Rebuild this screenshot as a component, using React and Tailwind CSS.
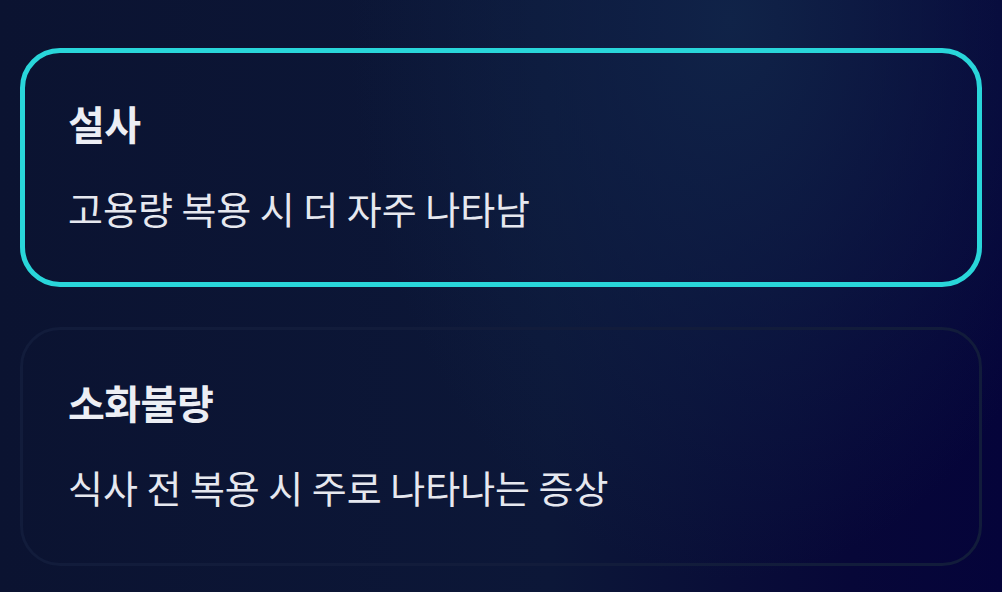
export default function App() {
  const items = [
    { title: "설사", desc: "고용량 복용 시 더 자주 나타남", active: true },
    { title: "소화불량", desc: "식사 전 복용 시 주로 나타나는 증상", active: false },
  ];
  return (
    <div
      className="w-[1002px] h-[592px] overflow-hidden bg-[#0a1130] bg-[radial-gradient(ellipse_380px_560px_at_730px_20px,#102348_0%,rgba(16,35,72,0)_100%),linear-gradient(90deg,#0b1331_0%,#0c1738_55%,#070738_85%,#05043a_100%)] px-5 pt-12 flex flex-col gap-10"
      style={{ fontFamily: '"Noto Sans CJK KR", "Noto Sans", sans-serif' }}
    >
      {items.map((it) => (
        <div
          key={it.title}
          className={
            it.active
              ? "h-[239px] rounded-[40px] border-[5px] border-[#29d6da] px-[43px] pt-[46px]"
              : "h-[239px] rounded-[40px] border-[3px] border-[#121c3b] px-[45px] pt-[48px]"
          }
        >
          <div className="text-[40px] font-bold leading-[48px] text-[#eceef4] tracking-[-0.5px]">
            {it.title}
          </div>
          <div className="mt-[37px] text-[38px] leading-[48px] text-[#e6e8ef]">
            {it.desc}
          </div>
        </div>
      ))}
    </div>
  );
}
